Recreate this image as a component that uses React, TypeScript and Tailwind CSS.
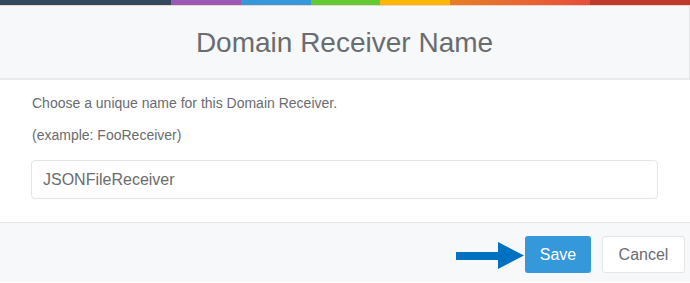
export default function App() {
  return (
    <div className="h-[283px] w-[690px] overflow-hidden bg-white font-['Liberation_Sans',Arial,sans-serif]">
      {/* Colour strip */}
      <div className="flex h-[5px]">
        <div className="w-[171px] bg-[#34495e]" />
        <div className="w-[70px] bg-[#9b59b6]" />
        <div className="w-[70px] bg-[#3498db]" />
        <div className="w-[69px] bg-[#62cb31]" />
        <div className="w-[70px] bg-[#ffb606]" />
        <div className="w-[140px] bg-gradient-to-r from-[#e67e22] to-[#e74c3c]" />
        <div className="flex-1 bg-[#c0392b]" />
      </div>
      <div className="h-px bg-[#e9d5cf]" />

      {/* Header */}
      <div className="flex h-[74px] items-center justify-center border-b-2 border-[#e8eaec] bg-[#f7f8fa] border-r border-r-[#e4e5e7]">
        <h2 className="pt-[2px] text-[28px] font-normal text-[#6a6c6f]">
          Domain Receiver Name
        </h2>
      </div>

      {/* Body */}
      <div className="h-[142px] px-[31px] pt-[13px]">
        <p className="pl-px text-[14px] leading-[20px] text-[#6a6c6f]">
          Choose a unique name for this Domain Receiver.
        </p>
        <p className="mt-[12px] pl-px text-[14px] leading-[20px] text-[#6a6c6f]">
          (example: FooReceiver)
        </p>
        <div className="mt-[15px] flex h-[39px] w-[627px] items-center rounded-[4px] border border-[#e4e5e7] px-[11px] text-[16px] text-[#6a6c6f]">
          JSONFileReceiver
        </div>
      </div>

      {/* Footer */}
      <div className="flex h-[60px] items-start justify-end gap-[11px] border-t border-[#e4e5e7] bg-[#f7f8fa] pr-[5px] pt-[13px]">
        <div className="mt-[6px] flex items-center">
          <div className="h-[8px] w-[43px] bg-[#0070c0]" />
          <svg width="26" height="27" viewBox="0 0 26 27" className="-ml-px">
            <polygon points="0,0 26,13.5 0,27" fill="#0070c0" />
          </svg>
        </div>
        <button className="-ml-[10px] h-[37px] w-[66px] rounded-[3px] bg-[#3498db] text-[16px] text-white">
          Save
        </button>
        <button className="h-[37px] w-[83px] rounded-[3px] border border-[#e4e5e7] bg-white text-[16px] text-[#6a6c6f]">
          Cancel
        </button>
      </div>
    </div>
  );
}
